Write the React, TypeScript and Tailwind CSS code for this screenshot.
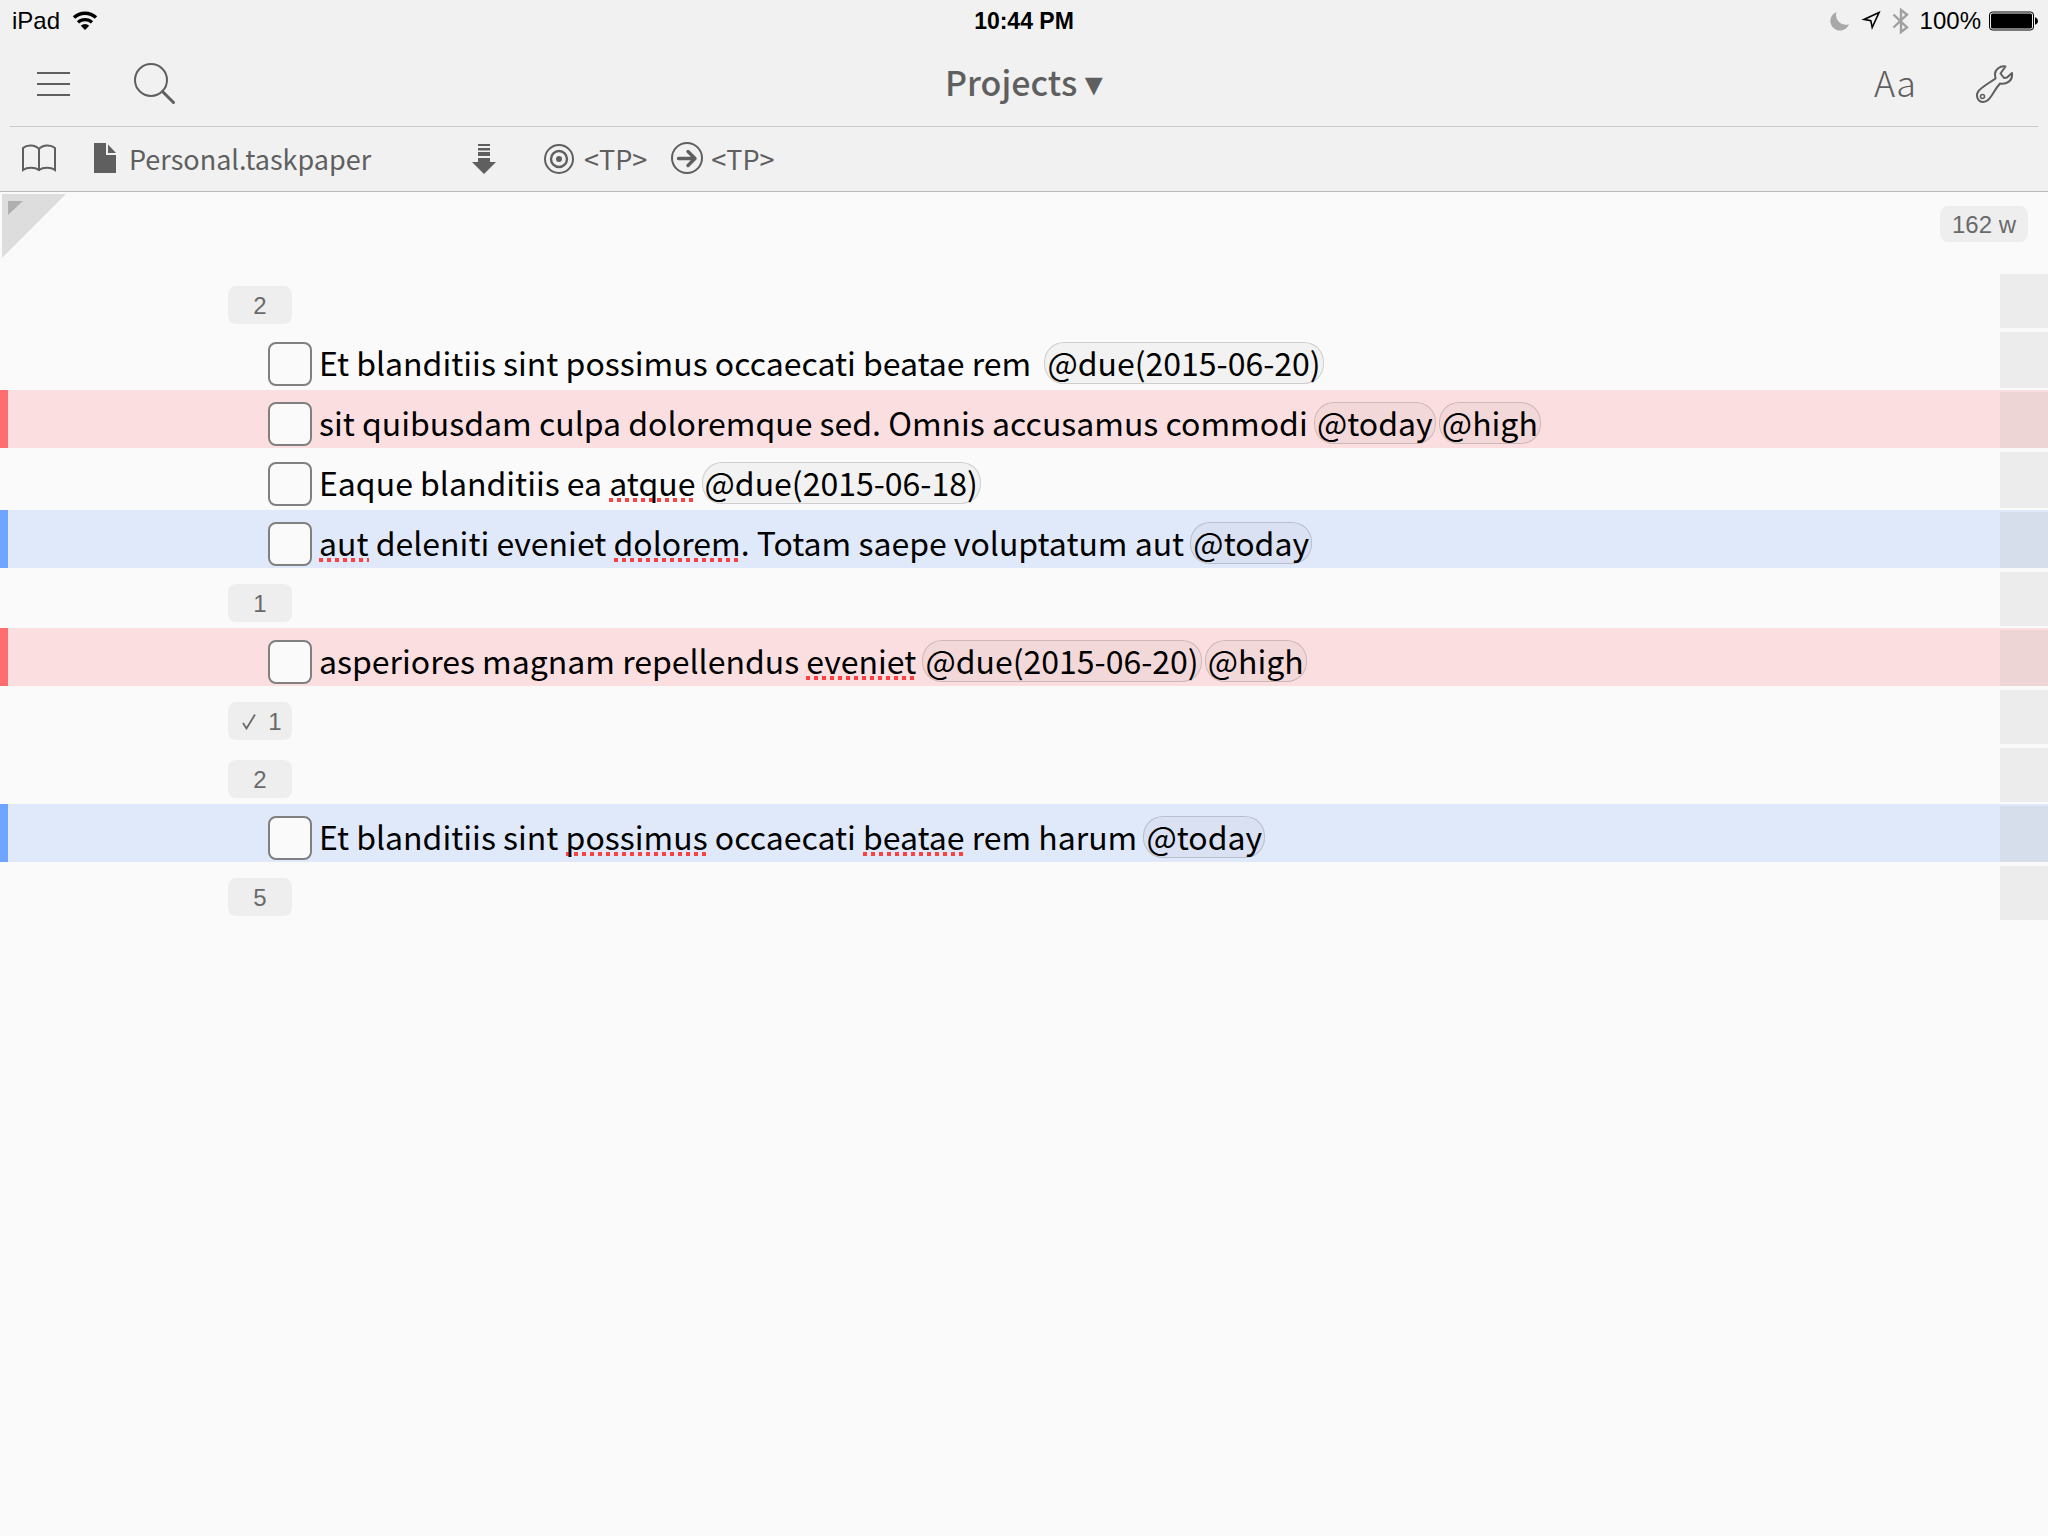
import React from "react";

type Tone = "red" | "blue" | undefined;
type Part = string | { tag: string } | { typo: string };
type Row =
  | { kind: "fold"; label: string; done?: boolean }
  | { kind: "task"; tone?: Tone; parts: Part[] };

const rows: Row[] = [
  { kind: "fold", label: "2" },
  { kind: "task", parts: ["Et blanditiis sint possimus occaecati beatae rem  ", { tag: "@due(2015-06-20)" }] },
  {
    kind: "task",
    tone: "red",
    parts: ["sit quibusdam culpa doloremque sed. Omnis accusamus commodi ", { tag: "@today" }, " ", { tag: "@high" }],
  },
  { kind: "task", parts: ["Eaque blanditiis ea ", { typo: "atque" }, " ", { tag: "@due(2015-06-18)" }] },
  {
    kind: "task",
    tone: "blue",
    parts: [{ typo: "aut" }, " deleniti eveniet ", { typo: "dolorem" }, ". Totam saepe voluptatum aut ", { tag: "@today" }],
  },
  { kind: "fold", label: "1" },
  {
    kind: "task",
    tone: "red",
    parts: ["asperiores magnam repellendus ", { typo: "eveniet" }, " ", { tag: "@due(2015-06-20)" }, " ", { tag: "@high" }],
  },
  { kind: "fold", label: "1", done: true },
  { kind: "fold", label: "2" },
  {
    kind: "task",
    tone: "blue",
    parts: ["Et blanditiis sint ", { typo: "possimus" }, " occaecati ", { typo: "beatae" }, " rem harum ", { tag: "@today" }],
  },
  { kind: "fold", label: "5" },
];

function StatusBar() {
  return (
    <div className="grid h-10 grid-cols-3 items-center px-[9px] pt-[2px] font-['Liberation_Sans',sans-serif] text-2xl text-black">
      <div className="flex items-center gap-3 pl-[3px]">
        <span>iPad</span>
        <svg width="26" height="20" viewBox="0 0 26 20" fill="none" aria-label="Wi-Fi">
          <path d="M2 6.6A16 16 0 0 1 24 6.6" stroke="#000" strokeWidth="3.4" />
          <path d="M6 11.4A10 10 0 0 1 20 11.4" stroke="#000" strokeWidth="3.2" />
          <path d="M13 19 8.8 14.8A6 6 0 0 1 17.2 14.8Z" fill="#000" />
        </svg>
      </div>
      <div className="text-center text-[23px] font-bold">10:44 PM</div>
      <div className="flex items-center justify-end">
        <svg className="mr-[10px]" width="20" height="20" viewBox="0 0 20 20" aria-label="Do not disturb">
          <path d="M6.5 1A9.6 9.6 0 1 0 19 13.2 9.8 9.8 0 0 1 6.5 1Z" fill="#a8a8a8" />
        </svg>
        <svg className="mr-[10px]" width="22" height="22" viewBox="0 0 22 22" fill="none" aria-label="Location">
          <path d="M19 2.500 4 9.400 10.800 10.600 12.200 17.500Z" stroke="#000" strokeWidth="1.600" />
        </svg>
        <svg className="mr-[10px]" width="18" height="28" viewBox="0 0 18 28" fill="none" aria-label="Bluetooth">
          <path d="M1.500 7.500 15 20.500 9 25V3L15 7.500 1.500 20.500" stroke="#a0a0a0" strokeWidth="2.400" />
        </svg>
        <span>100%</span>
        <svg className="ml-2" width="50" height="20" viewBox="0 0 50 20" fill="none" aria-label="Battery full">
          <rect x="0.5" y="1" width="44" height="18" rx="3" stroke="#000" />
          <rect x="2" y="2.5" width="41" height="15" rx="1.5" fill="#000" />
          <path d="M46 6.5h.8q2.2 1 2.2 3.500t-2.200 3.500H46Z" fill="#000" />
        </svg>
      </div>
    </div>
  );
}

function Toolbar() {
  return (
    <div className="mx-[10px] grid h-[87px] grid-cols-3 items-center border-b border-[#cbcbcb] pt-[2px] text-[#5f5f5f]">
      <div className="flex items-center gap-16 pl-[27px]">
        <button aria-label="Menu">
          <svg className="block" width="33" height="26" viewBox="0 0 33 26" fill="#5f5f5f">
            <path d="M0 1h33v2H0zM0 12h33v2H0zM0 23h33v2H0z" />
          </svg>
        </button>
        <button aria-label="Search">
          <svg className="block" width="42" height="42" viewBox="0 0 42 42" fill="none" stroke="#5f5f5f">
            <circle cx="17" cy="17" r="16" strokeWidth="2" />
            <path d="m28.500 28.500 11 11" strokeWidth="3" strokeLinecap="round" />
          </svg>
        </button>
      </div>
      <button className="justify-self-center pb-[2px] text-[34px] leading-none font-medium whitespace-nowrap">
        Projects <span className="font-['DejaVu_Sans',sans-serif] text-4xl leading-none">▾</span>
      </button>
      <div className="flex items-center justify-end gap-[58px] pr-6">
        <button className="pb-[6px] text-4xl leading-none font-light" aria-label="Text settings">
          Aa
        </button>
        <button aria-label="Tools">
          <svg className="block" width="40" height="40" viewBox="0 0 40 40" fill="none" stroke="#5f5f5f" strokeWidth="2" strokeLinejoin="round">
            <path d="M31.500 2.500C26 1.500 21 5.500 21 10 21 12 21.500 13.500 21.500 14.500 16 18.500 10 21.500 5 26.500 1 31 3.500 38 9 38 12.500 38 15 35.500 17 32.500 20 28 22 24 26 19.500 32.500 20.500 39 17 38 9L33 13.500 30 14 26.500 9.500Z" />
            <circle cx="8.500" cy="32.500" r="2" strokeWidth="1.600" />
          </svg>
        </button>
      </div>
    </div>
  );
}

function PathBar() {
  return (
    <div className="flex h-[65px] items-center border-b border-[#b9b9b9] pl-[21px] text-[27px] leading-none text-[#5f5f5f]">
      <button aria-label="Library">
        <svg className="block" width="36" height="30" viewBox="0 0 36 30" fill="none" stroke="#5f5f5f" strokeWidth="2">
          <path d="M18 27V5C14 .5 6 .5 2 4V26C6 23 14 23 18 26 22 23 30 23 34 26V4C30 .5 22 .5 18 5" />
        </svg>
      </button>
      <button className="ml-[37px] flex items-center gap-[13px]">
        <svg className="block" width="22" height="32" viewBox="0 0 22 32" fill="#5f5f5f">
          <path d="M0 0H12V12H22V30H0Z" />
          <path d="M14 1.500V10H22Z" />
        </svg>
        <span className="pb-[2px]">Personal.taskpaper</span>
      </button>
      <button className="ml-[101px]" aria-label="Move down">
        <svg className="block" width="24" height="30" viewBox="0 0 24 30" fill="#5f5f5f">
          <path d="M6 0h12v2H6zM6 4h12v2.500H6zM6 8h12v4H6zM6 14h12v4h6L12 30 0 18h6z" />
        </svg>
      </button>
      <button className="ml-12 flex items-center gap-[10px]">
        <svg className="block" width="30" height="30" viewBox="0 0 30 30" fill="none" stroke="#5f5f5f" strokeWidth="2">
          <circle cx="15" cy="15" r="14" />
          <circle cx="15" cy="15" r="8" strokeWidth="2.400" />
          <circle cx="15" cy="15" r="3" fill="#5f5f5f" stroke="none" />
        </svg>
        <span className="pb-[2px]">&lt;TP&gt;</span>
      </button>
      <button className="ml-6 flex items-center gap-2">
        <svg className="block" width="32" height="34" viewBox="0 0 32 34" fill="none" stroke="#5f5f5f">
          <circle cx="16" cy="16" r="15" strokeWidth="2" />
          <path d="M7.500 16.500H24M17 9.500l7 7-7 7" strokeWidth="3.400" strokeLinecap="round" strokeLinejoin="round" />
        </svg>
        <span className="pb-[2px]">&lt;TP&gt;</span>
      </button>
    </div>
  );
}

function TaskText({ parts }: { parts: Part[] }) {
  return (
    <span className="flex h-[42px] whitespace-pre text-[32px] leading-10 text-black">
      {parts.map((part, i) => {
        if (typeof part === "string") return <span key={i}>{part}</span>;
        if ("tag" in part)
          return (
            <span key={i} className="-mr-[3px] -ml-px rounded-[20px] bg-black/3 px-[3px] inset-ring inset-ring-black/15">
              {part.tag}
            </span>
          );
        return (
          <span
            key={i}
            className="bg-[repeating-linear-gradient(90deg,#ff4040_0_4px,transparent_4px_8px)] bg-[length:100%_4px] bg-[position:0_36px] bg-no-repeat"
          >
            {part.typo}
          </span>
        );
      })}
    </span>
  );
}

const toneClass = {
  red: "bg-[#fbdfe0] border-[#ff6e6e]",
  blue: "bg-[#e0e9fa] border-[#70a5ff]",
  none: "border-transparent",
};

function OutlineRow({ row }: { row: Row }) {
  if (row.kind === "fold") {
    return (
      <li className="flex h-[58px] justify-between pl-[228px]">
        <button
          className={`mt-[14px] flex h-[38px] w-16 items-center justify-center gap-3 rounded-lg bg-[#eeeeee] pt-[2px] font-['Liberation_Sans',sans-serif] text-2xl text-[#6a6a6a] ${row.done ? "pl-1" : ""}`}
        >
          {row.done && (
            <svg width="14" height="16" viewBox="0 0 14 16" fill="none" stroke="#6a6a6a" strokeWidth="1.800">
              <path d="M1 9 4.500 14.500 13 .5" />
            </svg>
          )}
          {row.label}
        </button>
        <span className="my-[2px] w-12 bg-[#a3a3a3]/15" />
      </li>
    );
  }
  const text = row.parts.map((p) => (typeof p === "string" ? p : "tag" in p ? p.tag : p.typo)).join("");
  return (
    <li className={`mb-[2px] flex h-[58px] border-l-8 pl-[260px] ${toneClass[row.tone ?? "none"]}`}>
      <input
        type="checkbox"
        aria-label={text}
        className="mt-3 size-11 shrink-0 appearance-none rounded-lg border-2 border-[#808080] bg-[#fafafa]"
      />
      <div className="mt-3 ml-[7px] flex-1">
        <TaskText parts={row.parts} />
      </div>
      <span className="mt-[2px] w-12 bg-[#a3a3a3]/15" />
    </li>
  );
}

export default function App() {
  return (
    <div className="min-h-screen bg-[#fafafa] font-['Noto_Sans_CJK_SC',sans-serif]">
      <header className="bg-[#f1f1f1]">
        <StatusBar />
        <Toolbar />
        <PathBar />
      </header>
      <main>
        <div className="flex h-[80px] items-start justify-between pt-[2px] pr-5 pl-[2px]">
          <button aria-label="Toggle corner panel">
            <svg className="block" width="64" height="64" viewBox="0 0 64 64">
              <path d="M0 0H64L0 64Z" fill="#dddddd" />
              <path d="M6 7H21L6 21Z" fill="#b0b0b0" />
            </svg>
          </button>
          <span className="mt-3 flex h-9 w-22 items-center justify-center rounded-lg bg-[#eeeeee] pt-[2px] font-['Liberation_Sans',sans-serif] text-2xl text-[#6a6a6a]">
            162 w
          </span>
        </div>
        <ul>
          {rows.map((row, i) => (
            <OutlineRow key={i} row={row} />
          ))}
        </ul>
      </main>
    </div>
  );
}
